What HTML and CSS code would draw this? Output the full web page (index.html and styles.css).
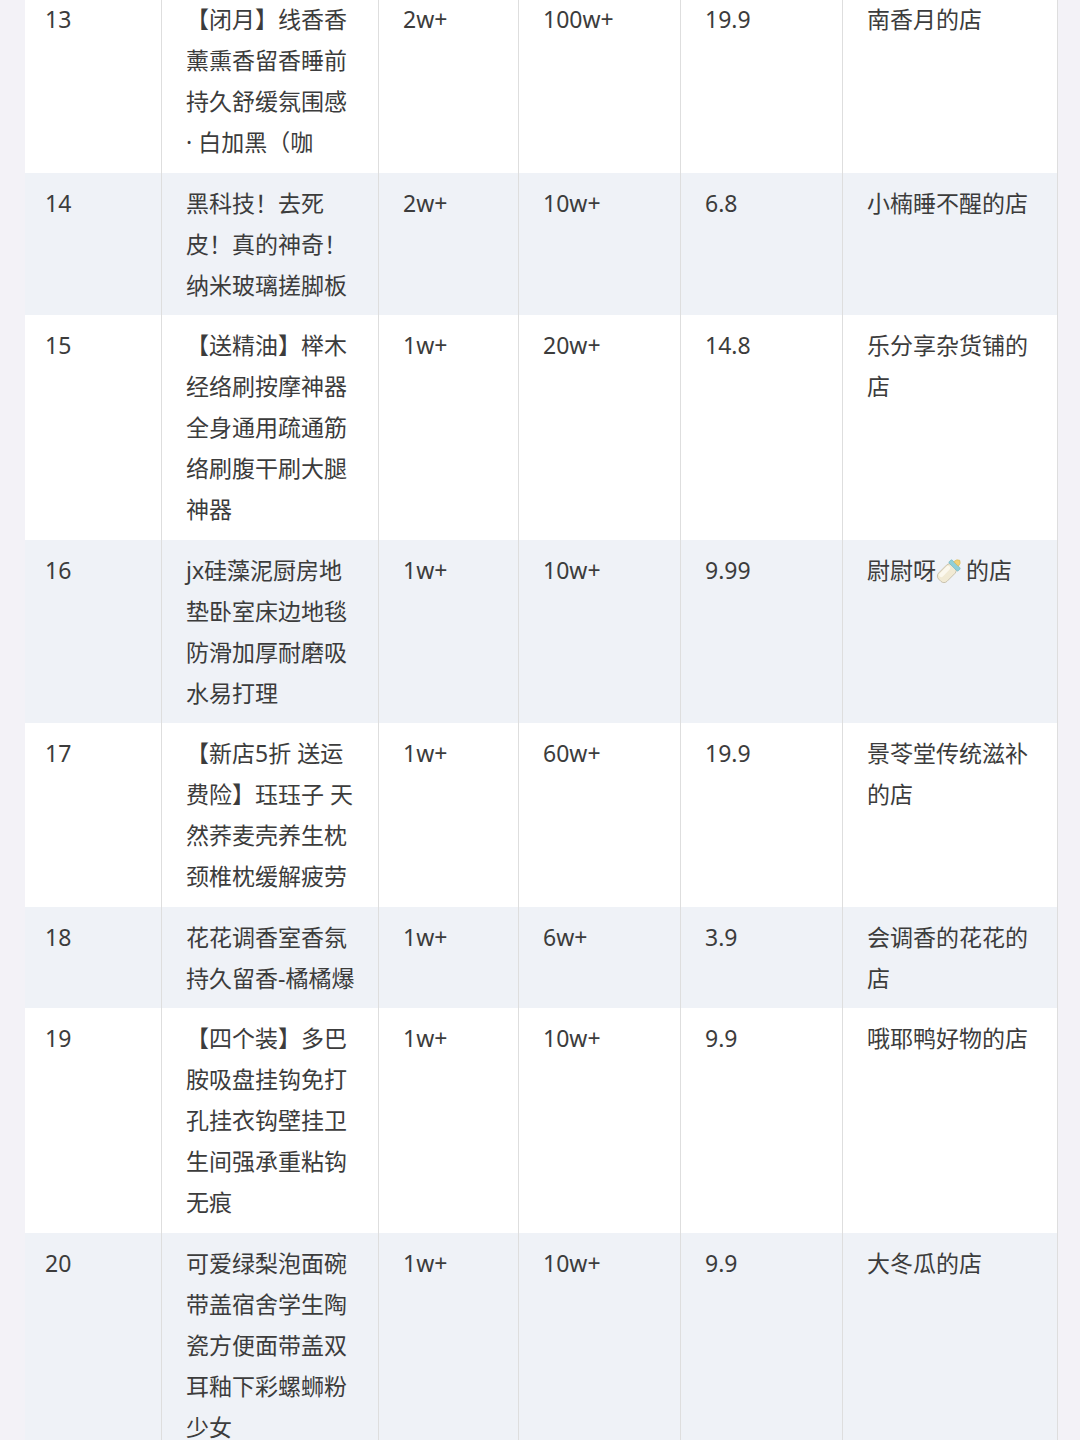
FILE: index.html
```html
<!DOCTYPE html>
<html lang="zh-CN">
<head>
<meta charset="utf-8">
<title>商品榜单</title>
<link rel="stylesheet" href="styles.css">
</head>
<body>
<div class="table">
  <div class="row">
    <div class="cell num">13</div>
    <div class="cell name">【闭月】线香香薰熏香留香睡前持久舒缓氛围感 · 白加黑（咖</div>
    <div class="cell">2w+</div>
    <div class="cell">100w+</div>
    <div class="cell">19.9</div>
    <div class="cell shop">南香月的店</div>
  </div>
  <div class="row alt">
    <div class="cell num">14</div>
    <div class="cell name">黑科技！去死皮！真的神奇！纳米玻璃搓脚板</div>
    <div class="cell">2w+</div>
    <div class="cell">10w+</div>
    <div class="cell">6.8</div>
    <div class="cell shop">小楠睡不醒的店</div>
  </div>
  <div class="row">
    <div class="cell num">15</div>
    <div class="cell name">【送精油】榉木经络刷按摩神器全身通用疏通筋络刷腹干刷大腿神器</div>
    <div class="cell">1w+</div>
    <div class="cell">20w+</div>
    <div class="cell">14.8</div>
    <div class="cell shop">乐分享杂货铺的店</div>
  </div>
  <div class="row alt">
    <div class="cell num">16</div>
    <div class="cell name">jx硅藻泥厨房地垫卧室床边地毯防滑加厚耐磨吸水易打理</div>
    <div class="cell">1w+</div>
    <div class="cell">10w+</div>
    <div class="cell">9.99</div>
    <div class="cell shop">尉尉呀<svg class="bottle" viewBox="0 0 28 28" aria-label="奶瓶"><g transform="rotate(45 14 14)"><rect x="8.5" y="9" width="11" height="18.5" rx="4" fill="#f1ead4" stroke="#c4bda8" stroke-width="0.8"/><rect x="9.5" y="12" width="4" height="13" rx="2" fill="#fbf8ee"/><rect x="8" y="6" width="12" height="4" rx="1.2" fill="#8fcfd8" stroke="#6bb3c0" stroke-width="0.6"/><path d="M11 6 Q11 2.2 14 1.2 Q17 2.2 17 6 Z" fill="#f0d27a" stroke="#d9b756" stroke-width="0.6"/></g></svg>的店</div>
  </div>
  <div class="row">
    <div class="cell num">17</div>
    <div class="cell name">【新店5折 送运费险】珏珏子 天然荞麦壳养生枕颈椎枕缓解疲劳</div>
    <div class="cell">1w+</div>
    <div class="cell">60w+</div>
    <div class="cell">19.9</div>
    <div class="cell shop">景苓堂传统滋补的店</div>
  </div>
  <div class="row alt">
    <div class="cell num">18</div>
    <div class="cell name">花花调香室香氛持久留香-橘橘爆</div>
    <div class="cell">1w+</div>
    <div class="cell">6w+</div>
    <div class="cell">3.9</div>
    <div class="cell shop">会调香的花花的店</div>
  </div>
  <div class="row">
    <div class="cell num">19</div>
    <div class="cell name">【四个装】多巴胺吸盘挂钩免打孔挂衣钩壁挂卫生间强承重粘钩无痕</div>
    <div class="cell">1w+</div>
    <div class="cell">10w+</div>
    <div class="cell">9.9</div>
    <div class="cell shop">哦耶鸭好物的店</div>
  </div>
  <div class="row alt">
    <div class="cell num">20</div>
    <div class="cell name">可爱绿梨泡面碗带盖宿舍学生陶瓷方便面带盖双耳釉下彩螺蛳粉少女</div>
    <div class="cell">1w+</div>
    <div class="cell">10w+</div>
    <div class="cell">9.9</div>
    <div class="cell shop">大冬瓜的店</div>
  </div>
</div>
</body>
</html>
```

FILE: styles.css
```css
html, body {
  margin: 0;
  padding: 0;
  background: #f3f2f7;
}

body {
  font-family: "Noto Sans", "Noto Sans CJK SC", sans-serif;
  font-size: 23px;
  line-height: 41px;
  color: #3c3c3c;
  overflow: hidden;
}

.table {
  width: 1033px;
  margin: -11px 0 0 25px;
}

.row {
  display: grid;
  grid-template-columns: 136px 217px 140px 162px 162px 216px;
  background: #ffffff;
}

.row.alt {
  background: #eff2f7;
}

.cell {
  box-sizing: border-box;
  padding: 10px 22px 9.5px 24px;
  border-left: 1px solid #dedede;
  word-break: normal;
  overflow-wrap: break-word;
}

.cell.num {
  border-left: none;
  padding-left: 20px;
}

.cell.shop {
  border-right: 1px solid #dedede;
}

.bottle {
  width: 30px;
  height: 30px;
  vertical-align: -6px;
  margin: 0 1px 0 -1px;
}
```
